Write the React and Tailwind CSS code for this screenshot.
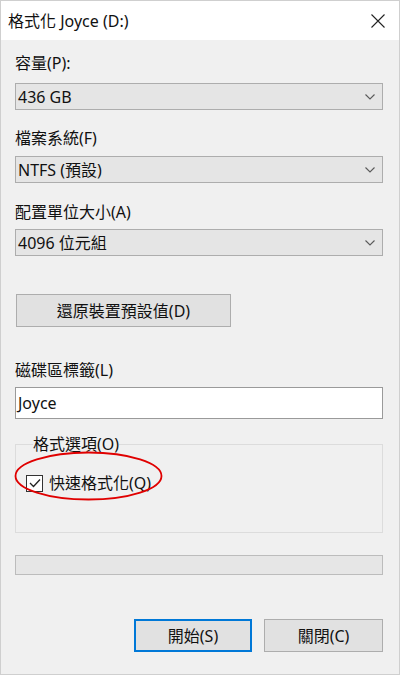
import React from "react";

const font = { fontFamily: '"Noto Sans", "Noto Sans CJK TC", sans-serif' };

function Chevron() {
  return (
    <svg width="10" height="6" viewBox="0 0 10 6" className="mr-[7px]">
      <path d="M0.5 0.5 L5 5 L9.5 0.5" fill="none" stroke="#5a5a5a" strokeWidth="1.1" />
    </svg>
  );
}

function Select({ value, className = "" }) {
  return (
    <div
      className={`flex h-[27px] items-center justify-between border border-[#adadad] bg-[#e5e5e5] pl-[2px] text-[16px] leading-[20px] text-[#111] ${className}`}
    >
      <span>{value}</span>
      <Chevron />
    </div>
  );
}

function Label({ children, className = "" }) {
  return <div className={`h-[20px] text-[16px] leading-[20px] text-[#111] ${className}`}>{children}</div>;
}

export default function App() {
  return (
    <div style={font} className="flex h-[675px] w-[400px] flex-col border border-[#cfcfcf] bg-[#f0f0f0]">
      {/* title bar */}
      <div className="flex h-[39px] items-center justify-between bg-white pl-[7px] pr-[14px]">
        <span className="text-[16px] leading-[20px] text-[#111]">格式化 Joyce (D:)</span>
        <svg width="14" height="14" viewBox="0 0 14 14">
          <path d="M0.5 0.5 L13.5 13.5 M13.5 0.5 L0.5 13.5" stroke="#222" strokeWidth="1.1" />
        </svg>
      </div>

      <div className="flex flex-col pl-[14px] pr-[16px]">
        <Label className="mt-[13px]">容量(P):</Label>
        <Select value="436 GB" className="mt-[10px]" />

        <Label className="mt-[18px]">檔案系統(F)</Label>
        <Select value="NTFS (預設)" className="mt-[8px]" />

        <Label className="mt-[19px]">配置單位大小(A)</Label>
        <Select value="4096 位元組" className="mt-[7px]" />

        <button className="ml-[1px] mt-[38px] h-[33px] w-[215px] border border-[#adadad] bg-[#e1e1e1] text-[16px] leading-[20px] text-[#111]">
          還原裝置預設值(D)
        </button>

        <Label className="mt-[33px]">磁碟區標籤(L)</Label>
        <div className="mt-[7px] flex h-[32px] items-center border border-[#9a9a9a] bg-white pl-[2px] text-[16px] leading-[20px] text-[#111]">
          Joyce
        </div>

        {/* group box */}
        <fieldset className="relative mt-[15px] h-[99px] border border-[#dcdcdc] px-[10px]">
          <legend className="ml-[7px] px-[0px] text-[16px] leading-[20px] text-[#111]">格式選項(O)</legend>
          <div className="mt-[19px] flex items-center gap-[6px]">
            <span className="flex h-[17px] w-[17px] items-center justify-center border border-[#333] bg-white">
              <svg width="12" height="10" viewBox="0 0 12 10">
                <path d="M1 5 L4.5 8.5 L11 1.5" fill="none" stroke="#222" strokeWidth="1.3" />
              </svg>
            </span>
            <span className="text-[16px] leading-[20px] text-[#111]">快速格式化(Q)</span>
          </div>
          <svg
            className="pointer-events-none absolute left-[-2px] top-[-3px]"
            width="149"
            height="50"
            viewBox="0 0 149 50"
          >
            <ellipse cx="74.5" cy="25" rx="73" ry="23.5" fill="none" stroke="#e00000" strokeWidth="1.8" />
          </svg>
        </fieldset>

        {/* progress */}
        <div className="mt-[22px] h-[20px] border border-[#bcbcbc] bg-[#e6e6e6]" />

        {/* buttons */}
        <div className="mt-[44px] flex justify-end gap-[12px]">
          <button className="h-[33px] w-[118px] border-2 border-[#0078d7] bg-[#e1e1e1] text-[16px] leading-[20px] text-[#111]">
            開始(S)
          </button>
          <button className="h-[33px] w-[119px] border border-[#adadad] bg-[#e1e1e1] text-[16px] leading-[20px] text-[#111]">
            關閉(C)
          </button>
        </div>
      </div>
    </div>
  );
}
